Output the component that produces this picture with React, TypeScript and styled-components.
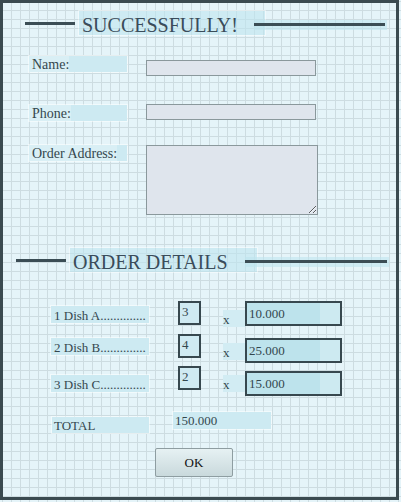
import styled, { createGlobalStyle } from "styled-components"

const GlobalStyle = createGlobalStyle`
  html, body {
    margin: 0;
    padding: 0;
  }
  body {
    background-color: #e5f4f9;
    background-image:
      linear-gradient(to right, #cddce1 1px, transparent 1px),
      linear-gradient(to bottom, #cddce1 1px, transparent 1px);
    background-size: 9px 9px;
    background-position: 2px 1px;
    font-family: "Liberation Serif", "Times New Roman", serif;
    color: #34474e;
  }
`

interface Dish {
  name: string
  qty: number
  price: string
  offsets: { row: number; label: number; qty: number; x: number; price: number }
}

const dishes: Dish[] = [
  { name: "1 Dish A", qty: 3, price: "10.000", offsets: { row: 29, label: 5, qty: 0, x: 9, price: 0 } },
  { name: "2 Dish B", qty: 4, price: "25.000", offsets: { row: 7, label: 4, qty: 0, x: 9, price: 4 } },
  { name: "3 Dish C", qty: 2, price: "15.000", offsets: { row: 3, label: 9, qty: 0, x: 9, price: 5 } },
]

function SectionTitle({
  title,
  indent,
  boxWidth,
  overlap,
  tailWidth,
  top,
}: {
  title: string
  indent: number
  boxWidth: number
  overlap: number
  tailWidth: number
  top: number
}) {
  return (
    <HeaderRow $indent={indent} $top={top}>
      <Rule $width={50} />
      <TitleBox $width={boxWidth}>{title}</TitleBox>
      <RuleTail $width={tailWidth} $overlap={overlap}>
        <Rule $width={tailWidth - 2} />
      </RuleTail>
    </HeaderRow>
  )
}

function App() {
  return (
    <>
      <GlobalStyle />
      <Frame>
        <SectionTitle title="SUCCESSFULLY!" indent={22} boxWidth={186} overlap={11} tailWidth={133} top={8} />

        <Field $top={21}>
          <Label $offset={0}>
            <span>Name:</span>
          </Label>
          <Input $offset={4} />
        </Field>
        <Field $top={28}>
          <Label $offset={1}>
            <span>Phone:</span>
          </Label>
          <Input $offset={0} />
        </Field>
        <Field $top={24}>
          <Label $offset={0}>
            <span>Order Address:</span>
          </Label>
          <TextArea />
        </Field>

        <SectionTitle title="ORDER DETAILS" indent={13} boxWidth={187} overlap={12} tailWidth={144} top={33} />

        {dishes.map((d) => (
          <DishRow key={d.name} $top={d.offsets.row}>
            <DishLabel $offset={d.offsets.label}>{d.name}..............</DishLabel>
            <QtyBox $offset={d.offsets.qty}>{d.qty}</QtyBox>
            <Times $offset={d.offsets.x}>x</Times>
            <PriceBox $offset={d.offsets.price}>
              <span>{d.price}</span>
            </PriceBox>
          </DishRow>
        ))}

        <TotalRow>
          <TotalLabel>TOTAL</TotalLabel>
          <TotalValue>150.000</TotalValue>
        </TotalRow>

        <ButtonRow>
          <OkButton>OK</OkButton>
        </ButtonRow>
      </Frame>
    </>
  )
}

const Frame = styled.div`
  box-sizing: border-box;
  width: 399px;
  height: 500px;
  border: 3px solid #3a4a50;
  display: flex;
  flex-direction: column;
`

const HeaderRow = styled.div<{ $indent: number; $top: number }>`
  display: flex;
  align-items: center;
  padding-left: ${(p) => p.$indent}px;
  margin-top: ${(p) => p.$top}px;
`

const Rule = styled.span<{ $width: number }>`
  display: block;
  width: ${(p) => p.$width}px;
  height: 3px;
  background: #3b4d55;
`

const TitleBox = styled.div<{ $width: number }>`
  box-sizing: border-box;
  width: ${(p) => p.$width}px;
  height: 24px;
  margin-left: 4px;
  padding-left: 3px;
  font-size: 20px;
  line-height: 28px;
  color: #3a4c5a;
  white-space: nowrap;
  background: rgba(190, 228, 238, 0.6);
  outline: 1px solid rgba(255, 255, 255, 0.45);
`

const RuleTail = styled.div<{ $width: number; $overlap: number }>`
  display: flex;
  align-items: center;
  width: ${(p) => p.$width}px;
  height: 10px;
  margin-left: -${(p) => p.$overlap}px;
  margin-top: 3px;
  background: rgba(190, 228, 238, 0.6);
`

const Field = styled.div<{ $top: number }>`
  display: flex;
  align-items: flex-start;
  padding-left: 26px;
  margin-top: ${(p) => p.$top}px;
`

const Label = styled.label<{ $offset: number }>`
  box-sizing: border-box;
  width: 98px;
  height: 16px;
  margin-top: ${(p) => p.$offset}px;
  font-size: 14px;
  line-height: 18px;
  background: #cdeaf2;
  outline: 1px solid rgba(255, 255, 255, 0.5);
  white-space: nowrap;

  span {
    display: inline-block;
    height: 16px;
    padding-left: 3px;
    background: rgba(255, 255, 255, 0.25);
  }
`

const Input = styled.input<{ $offset: number }>`
  box-sizing: border-box;
  width: 170px;
  height: 16px;
  margin: ${(p) => p.$offset}px 0 0 19px;
  padding: 0;
  border: 1px solid #8a989c;
  background: #dfe5ed;
`

const TextArea = styled.textarea`
  box-sizing: border-box;
  width: 172px;
  height: 70px;
  margin: 0 0 0 19px;
  padding: 0;
  border: 1px solid #8a989c;
  background: #dfe5ed;
`

const DishRow = styled.div<{ $top: number }>`
  display: flex;
  align-items: flex-start;
  padding-left: 48px;
  margin-top: ${(p) => p.$top}px;
`

const DishLabel = styled.div<{ $offset: number }>`
  box-sizing: border-box;
  width: 98px;
  height: 17px;
  margin-top: ${(p) => p.$offset}px;
  padding-left: 3px;
  font-size: 13px;
  line-height: 19px;
  white-space: nowrap;
  background: #cdeaf2;
  outline: 1px solid rgba(255, 255, 255, 0.5);
`

const QtyBox = styled.div<{ $offset: number }>`
  box-sizing: border-box;
  width: 23px;
  height: 24px;
  margin: ${(p) => p.$offset}px 0 0 29px;
  padding-left: 2px;
  border: 2px solid #37484f;
  font-size: 13px;
  line-height: 18px;
  background: #cfeaf2;
`

const Times = styled.div<{ $offset: number }>`
  box-sizing: border-box;
  width: 22px;
  height: 17px;
  margin: ${(p) => p.$offset}px 0 0 22px;
  font-size: 13px;
  line-height: 19px;
  background: #d2ecf3;
`

const PriceBox = styled.div<{ $offset: number }>`
  box-sizing: border-box;
  width: 97px;
  height: 25px;
  margin-top: ${(p) => p.$offset}px;
  border: 2px solid #37484f;
  background: #cdeaf1;

  span {
    display: block;
    box-sizing: border-box;
    width: 73px;
    height: 21px;
    padding-left: 2px;
    font-size: 13px;
    line-height: 21px;
    background: #bde3ec;
  }
`

const TotalRow = styled.div`
  display: flex;
  align-items: flex-start;
  padding-left: 49px;
  margin-top: 16px;
`

const TotalLabel = styled.div`
  box-sizing: border-box;
  width: 97px;
  height: 16px;
  margin-top: 5px;
  padding-left: 2px;
  font-size: 13px;
  line-height: 18px;
  background: #cdeaf2;
  outline: 1px solid rgba(255, 255, 255, 0.5);
`

const TotalValue = styled.div`
  box-sizing: border-box;
  width: 98px;
  height: 17px;
  margin-left: 24px;
  padding-left: 2px;
  font-size: 13px;
  line-height: 18px;
  background: #cdeaf2;
  outline: 1px solid rgba(255, 255, 255, 0.5);
`

const ButtonRow = styled.div`
  display: flex;
  padding-left: 152px;
  margin-top: 15px;
`

const OkButton = styled.button`
  box-sizing: border-box;
  width: 78px;
  height: 29px;
  padding: 0;
  border: 1px solid #8e9da1;
  border-radius: 2px;
  background: linear-gradient(to bottom, #e6f1f3, #c9d9dc);
  font-family: "Liberation Serif", "Times New Roman", serif;
  font-size: 13px;
  color: #111;
`

export default App
